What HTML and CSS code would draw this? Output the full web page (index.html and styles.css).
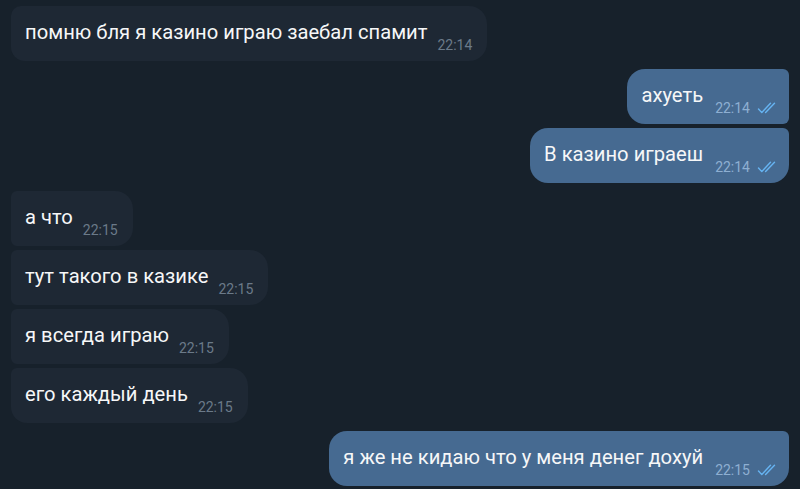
FILE: index.html
```html
<!DOCTYPE html>
<html lang="ru">
<head>
    <meta charset="UTF-8">
    <meta name="viewport" content="width=device-width, initial-scale=1.0">
    <title>Чат</title>
    <link rel="stylesheet" href="styles.css">
</head>
<body>
    <div class="chat">
        <div class="msg in solo">
            <span class="text">помню бля я казино играю заебал спамит</span>
            <span class="meta"><span class="time">22:14</span></span>
        </div>

        <div class="msg out first group-gap">
            <span class="text">ахуеть</span>
            <span class="meta"><span class="time">22:14</span><svg class="check" viewBox="0 0 20 12"><path d="M1.5 7 L4.8 10.6 L13.5 1.2 M8.6 10.6 L17.5 1.2"/></svg></span>
        </div>
        <div class="msg out last">
            <span class="text">В казино играеш</span>
            <span class="meta"><span class="time">22:14</span><svg class="check" viewBox="0 0 20 12"><path d="M1.5 7 L4.8 10.6 L13.5 1.2 M8.6 10.6 L17.5 1.2"/></svg></span>
        </div>

        <div class="msg in first group-gap">
            <span class="text">а что</span>
            <span class="meta"><span class="time">22:15</span></span>
        </div>
        <div class="msg in mid">
            <span class="text">тут такого в казике</span>
            <span class="meta"><span class="time">22:15</span></span>
        </div>
        <div class="msg in mid">
            <span class="text">я всегда играю</span>
            <span class="meta"><span class="time">22:15</span></span>
        </div>
        <div class="msg in last">
            <span class="text">его каждый день</span>
            <span class="meta"><span class="time">22:15</span></span>
        </div>

        <div class="msg out last group-gap">
            <span class="text">я же не кидаю что у меня денег дохуй</span>
            <span class="meta"><span class="time">22:15</span><svg class="check" viewBox="0 0 20 12"><path d="M1.5 7 L4.8 10.6 L13.5 1.2 M8.6 10.6 L17.5 1.2"/></svg></span>
        </div>
    </div>
</body>
</html>
```

FILE: styles.css
```css
body {
    margin: 0;
    padding: 0;
    background-color: #17212b;
    font-family: Roboto, "Noto Sans", sans-serif;
    color: #fff;
    height: 489px;
    overflow: hidden;
}
.chat {
    display: flex;
    flex-direction: column;
    gap: 4px;
    padding: 6px 11px 0 11px;
}
.msg {
    display: flex;
    align-items: flex-end;
    height: 55px;
    box-sizing: border-box;
    padding: 14px 15px 8px 14px;
}
.msg.group-gap {
    margin-top: 4px;
}
.msg.in {
    align-self: flex-start;
    background-color: #1e2834;
    border-radius: 6px 18px 18px 6px;
}
.msg.in.solo {
    border-radius: 10px 18px 18px 14px;
}
.msg.in.last {
    border-radius: 6px 18px 18px 16px;
}
.msg.out {
    align-self: flex-end;
    background-color: #466a91;
    border-radius: 18px 6px 6px 18px;
    padding-right: 12px;
}
.msg.out.last {
    border-radius: 18px 6px 18px 18px;
}
.text {
    font-size: 20.2px;
    line-height: 24px;
    margin-bottom: 9px;
    white-space: nowrap;
    color: #f6f7f8;
}
.meta {
    display: flex;
    align-items: center;
    margin-left: 10px;
    line-height: 16px;
}
.out .meta {
    margin-left: 12px;
}
.time {
    font-size: 14px;
    color: #6b7a89;
}
.out .time {
    color: #8eafd2;
}
.check {
    width: 20px;
    height: 12px;
    margin-left: 7px;
    fill: none;
    stroke: #66b4f2;
    stroke-width: 1.4;
    stroke-linecap: round;
    stroke-linejoin: round;
}
```
